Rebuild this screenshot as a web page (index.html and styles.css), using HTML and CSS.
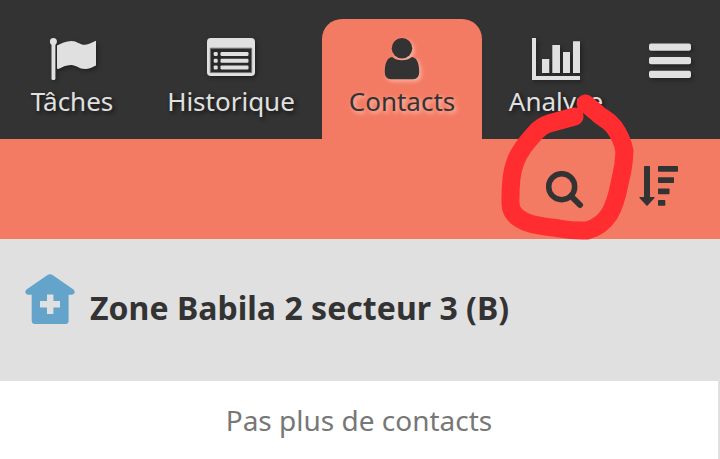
FILE: index.html
```html
<!DOCTYPE html>
<html lang="fr">
<head>
<meta charset="utf-8">
<title>Contacts</title>
<link rel="stylesheet" href="styles.css">
</head>
<body>
<div class="app">
  <header class="tabs">
    <a class="tab tab-tasks">
      <svg class="icon" width="48" height="44" viewBox="0 0 48 44"><circle cx="5.4" cy="3.6" r="3.5"/><rect x="3.5" y="4" width="3.9" height="38" rx="1.6"/><path d="M9 7.6C13 5.3 18 3 23.5 3C29 3 32 7 37 6.8C41 6.6 44 4.6 48 2.8V27.5C44.5 29.2 41 31 37 31C31 31 28.5 27 23 27C18 27 14 29.3 10.3 31Q9 31.2 9 30Z"/></svg>
      <span>Tâches</span>
    </a>
    <a class="tab tab-history">
      <svg class="icon" width="48" height="44" viewBox="0 0 48 44"><rect width="48" height="38" rx="3.8"/><path class="inset" d="M3.3 10.2H44.7V34.6H3.3Z"/><g><rect x="6.7" y="14" width="4" height="4" rx="1.2"/><rect x="6.7" y="20.7" width="4" height="4" rx="1.2"/><rect x="6.7" y="27.4" width="4" height="4" rx="1.2"/><rect x="13.5" y="14" width="28" height="4" rx="1.2"/><rect x="13.5" y="20.7" width="28" height="4" rx="1.2"/><rect x="13.5" y="27.4" width="28" height="4" rx="1.2"/></g></svg>
      <span>Historique</span>
    </a>
    <a class="tab tab-contacts active">
      <svg class="icon" width="36" height="44" viewBox="0 0 36 44"><circle cx="18" cy="10.3" r="10.3"/><path d="M8.2 19C2.5 19.6.8 26.5.8 34C.8 38.5 3 41.2 7 41.2H29C33 41.2 35.2 38.5 35.2 34C35.2 26.5 33.5 19.6 27.8 19C25.1 21.2 21.9 22.2 18 22.2S10.9 21.2 8.2 19Z"/></svg>
      <span>Contacts</span>
    </a>
    <a class="tab tab-analytics">
      <svg class="icon" width="48" height="44" viewBox="0 0 48 44"><path d="M0 0H4V38H48V42H0ZM10 21H17.3V35H10ZM20.3 7H28V35H20.3ZM31 14H38V35H31ZM41 3.3H48V35H41Z"/></svg>
      <span>Analyse</span>
    </a>
    <a class="menu">
      <svg class="icon" width="42" height="36" viewBox="0 0 42 36"><rect y=".5" width="42" height="7.3" rx="2"/><rect y="14" width="42" height="7.3" rx="2"/><rect y="27.8" width="42" height="7.3" rx="2"/></svg>
    </a>
  </header>
  <div class="toolbar">
    <svg class="search" width="38" height="38" viewBox="0 0 38 38"><circle cx="15.7" cy="15.7" r="13" fill="none" stroke="#333" stroke-width="5.5"/><path d="M25 25L34 34" stroke="#333" stroke-width="6" stroke-linecap="round"/></svg>
    <svg class="sort" width="40" height="40" viewBox="0 0 40 40"><path d="M5 .8Q5 0 5.8 0H10.2Q11 0 11 .8V31H15Q16.2 31.3 15.3 32.3L8.6 39.5Q8 40 7.4 39.5L.7 32.3Q-.2 31.3 1 31H5Z"/><rect x="19" y="0" width="20" height="5.7" rx=".7"/><rect x="19" y="11.3" width="16" height="5.7" rx=".7"/><rect x="19" y="22.5" width="11.5" height="5.7" rx=".7"/><rect x="19" y="34" width="7.3" height="5.8" rx=".7"/></svg>
  </div>
  <main>
    <div class="place">
      <svg width="50" height="50" viewBox="0 0 50 50"><path fill="#64a3ca" d="M22.5 1Q25 -.7 27.5 1L48.5 15.5Q50 17 49.5 19Q48.7 20.8 46.5 20.8H43.6V46.5Q43.6 50 40.5 50H10Q6.7 50 6.7 46.5V20.8H3.5Q1.3 20.8.5 19Q0 17 1.5 15.5Z"/><path fill="#e0e0e0" d="M22 20.5H28.4V27H35V33.6H28.4V40H22V33.6H15V27H22Z"/></svg>
      <h1>Zone Babila 2 secteur 3 (B)</h1>
    </div>
    <p class="empty">Pas plus de contacts</p>
  </main>
  <svg class="mark" width="720" height="459" viewBox="0 0 720 459"><path d="M574.5 116.5L549 123.5Q541 126 536 132C527 142 519 151 515 163Q510 176 510.5 204C511 214 519 220 530 223.5C540 226.500 549 227 559 228.5Q573 231 587 230.5Q601 227 609.500 214C617 201 618 190 620.5 179Q624 166 624.500 151Q622 138 614 127C606 117 602 119 596 112L585.5 103.5"/></svg>
</div>
</body>
</html>
```
FILE: styles.css
```css
* { box-sizing: border-box; }
body {
  margin: 0;
  font-family: "Noto Sans", sans-serif;
  color: #333;
  background: #e0e0e0;
}
.app {
  position: relative;
  height: 459px;
  overflow: hidden;
  display: flex;
  flex-direction: column;
}
.tabs {
  display: flex;
  align-items: flex-end;
  height: 139px;
  padding-left: 4px;
  background: #333;
}
.tab {
  display: flex;
  flex-direction: column;
  align-items: center;
  height: 120px;
  padding-top: 19px;
  color: #e0e0e0;
  font-size: 26px;
  line-height: 36px;
  white-space: nowrap;
  text-shadow: 2px 2px 4px #111;
}
.tab .icon { margin-bottom: 1px; }
.icon {
  display: block;
  flex: none;
  fill: #e0e0e0;
  filter: drop-shadow(2px 2px 2px #1118);
}
.inset { fill: #292929; stroke: #777; stroke-width: 1; }
.tab-tasks { width: 136px; }
.tab-history { width: 182px; }
.tab-contacts { width: 160px; }
.tab-analytics { width: 148px; }
.active {
  color: #333;
  background: #f47b63;
  border-radius: 20px 20px 0 0;
  text-shadow: 2px 2px 4px #ffc5b9;
}
.active .icon { fill: #333; filter: drop-shadow(2px 2px 2px #ffd0c6aa); }
.menu {
  width: 80px;
  height: 120px;
  padding: 24px 19px;
}
.toolbar {
  display: flex;
  height: 100px;
  padding: 27px 41px 0 0;
  justify-content: flex-end;
  gap: 55px;
  background: #f47b63;
}
.toolbar svg { fill: #333; }
.search { margin-top: 5px; }
.place {
  display: flex;
  align-items: flex-start;
  height: 142px;
  padding: 35px 25px 0;
  gap: 15px;
}
h1 {
  margin: 12px 0 0;
  font-size: 32px;
  line-height: 44px;
  font-weight: 700;
  letter-spacing: 0.03px;
  white-space: nowrap;
}
.empty {
  width: 718px;
  height: 78px;
  margin: 0;
  padding-top: 19px;
  background: #fff;
  color: #777;
  font-size: 28px;
  line-height: 40px;
  text-align: center;
}
.mark {
  position: absolute;
  inset: 0;
  pointer-events: none;
  fill: none;
  stroke: #ff2d30;
  stroke-width: 18;
  stroke-linecap: round;
  stroke-linejoin: round;
}
```
